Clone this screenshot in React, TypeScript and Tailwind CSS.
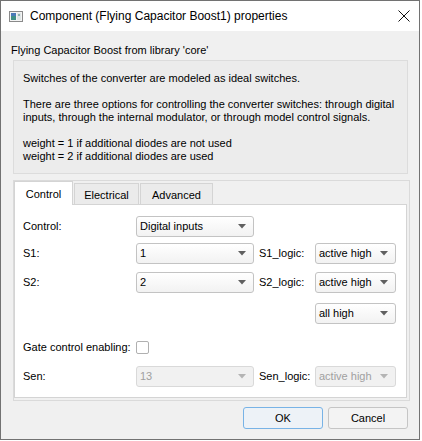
const font = { fontFamily: '"Liberation Sans", Arial, sans-serif' };

const Arrow = ({ disabled }: { disabled?: boolean }) => (
  <svg width="8" height="5" viewBox="0 0 8 5" className="shrink-0">
    <path d="M0 0 H8 L4 4.5 Z" fill={disabled ? '#b4b4b4' : '#606060'} />
  </svg>
);

interface ComboProps {
  value: string;
  width: string;
  disabled?: boolean;
}

const Combo = ({ value, width, disabled }: ComboProps) => (
  <div
    className={`flex h-[21px] items-center justify-between rounded-[3px] border pl-[3px] pr-[7px] ${width} ${
      disabled
        ? 'border-[#d9d9d9] bg-[#f1f1f1] text-[#a0a0a0]'
        : 'border-[#c3c3c3] bg-gradient-to-b from-white to-[#f2f2f2] text-black'
    }`}
  >
    <span className="leading-none">{value}</span>
    <Arrow disabled={disabled} />
  </div>
);

const Label = ({ children }: { children: React.ReactNode }) => (
  <span className="w-[113px] shrink-0">{children}</span>
);

const TitleIcon = () => (
  <svg width="14" height="11" viewBox="0 0 14 11">
    <rect x="0.5" y="0.5" width="13" height="10" fill="#f4f4f4" stroke="#8a8a8a" />
    <rect x="2" y="2" width="5" height="7" fill="#3f8f86" />
    <rect x="2" y="2" width="5" height="3" fill="#4a79b8" />
    <rect x="8" y="2" width="4" height="7" fill="#dfe6e6" />
    <rect x="9" y="3" width="2" height="2" fill="#8fb2b0" />
  </svg>
);

export default function App() {
  return (
    <div className="h-[441px] w-[422px] bg-white text-[11px] text-black" style={font}>
      <div className="flex h-[440px] w-[420px] flex-col border border-[#727272]">
        {/* title bar */}
        <div className="flex h-[30px] shrink-0 items-center bg-white pl-[8px] pr-[8px]">
          <TitleIcon />
          <span className="ml-[7px] text-[12px] leading-none">
            Component (Flying Capacitor Boost1) properties
          </span>
          <svg width="12" height="12" viewBox="0 0 12 12" className="ml-auto mr-[1px]">
            <path d="M0.5 0.5 L11.5 11.5 M11.5 0.5 L0.5 11.5" stroke="#111" strokeWidth="1" />
          </svg>
        </div>

        {/* body */}
        <div className="flex flex-1 flex-col bg-[#f0f0f0] px-[10px]">
          <p className="mt-[13px] leading-[13px]">Flying Capacitor Boost from library 'core'</p>

          <div className="ml-[2px] mt-[3px] w-[395px] border border-[#dcdcdc] bg-[#ececec] pb-[10px] pl-[9px] pt-[11px] leading-[13px]">
            <p>Switches of the converter are modeled as ideal switches.</p>
            <p className="mt-[13px]">
              There are three options for controlling the converter switches: through digital
              <br />
              inputs, through the internal modulator, or through model control signals.
            </p>
            <p className="mt-[13px]">
              weight = 1 if additional diodes are not used
              <br />
              weight = 2 if additional diodes are used
            </p>
          </div>

          {/* tab frame */}
          <div className="ml-[2px] mt-[6px] h-[221px] w-[397px] border border-[#dadada]">
            <div className="flex h-[23px] items-end">
              <div className="relative z-10 -mb-px flex h-[24px] w-[59px] items-center justify-center border-x border-t border-[#d4d4d4] bg-white pt-[2px]">
                Control
              </div>
              <div className="ml-px flex h-[21px] w-[65px] items-center justify-center border-x border-t border-[#d4d4d4] bg-[#ebebeb] pt-[2px]">
                Electrical
              </div>
              <div className="ml-px flex h-[21px] w-[73px] items-center justify-center border-x border-t border-[#d4d4d4] bg-[#ebebeb] pt-[2px]">
                Advanced
              </div>
            </div>

            <div className="h-[194px] w-[393px] border border-[#d4d4d4] bg-white pl-[8px] pt-[11px]">
              <div className="flex h-[21px] items-center">
                <Label>Control:</Label>
                <Combo value="Digital inputs" width="w-[118px]" />
              </div>

              <div className="mt-[6px] flex h-[21px] items-center">
                <Label>S1:</Label>
                <Combo value="1" width="w-[118px]" />
                <span className="ml-[5px] w-[56px]">S1_logic:</span>
                <Combo value="active high" width="w-[81px]" />
              </div>

              <div className="mt-[8px] flex h-[21px] items-center">
                <Label>S2:</Label>
                <Combo value="2" width="w-[118px]" />
                <span className="ml-[5px] w-[56px]">S2_logic:</span>
                <Combo value="active high" width="w-[81px]" />
              </div>

              <div className="mt-[10px] flex h-[21px] items-center pl-[292px]">
                <Combo value="all high" width="w-[81px]" />
              </div>

              <div className="mt-[13px] flex h-[21px] items-center">
                <Label>Gate control enabling:</Label>
                <div className="h-[13px] w-[13px] rounded-[2px] border border-[#b0b0b0] bg-white" />
              </div>

              <div className="mt-[8px] flex h-[21px] items-center">
                <Label>Sen:</Label>
                <Combo value="13" width="w-[118px]" disabled />
                <span className="ml-[5px] w-[56px]">Sen_logic:</span>
                <Combo value="active high" width="w-[81px]" disabled />
              </div>
            </div>
          </div>

          {/* buttons */}
          <div className="mt-[6px] flex justify-end gap-[5px] pr-[1px]">
            <button className="h-[22px] w-[80px] rounded-[3px] border border-[#78b3e6] bg-[#edf2f7] text-[11px]">
              OK
            </button>
            <button className="h-[22px] w-[80px] rounded-[3px] border border-[#c5c5c5] bg-[#f3f3f3] text-[11px]">
              Cancel
            </button>
          </div>
        </div>
      </div>
    </div>
  );
}
